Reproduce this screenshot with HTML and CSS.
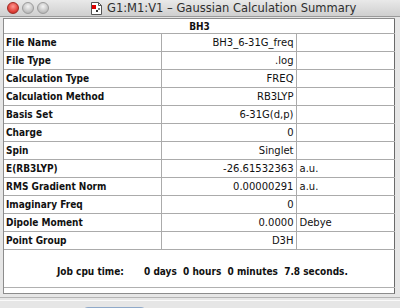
FILE: index.html
```html
<!DOCTYPE html>
<html>
<head>
<meta charset="utf-8">
<link rel="stylesheet" href="styles.css">
</head>
<body>
<div class="window">
  <div class="titlebar">
    <div class="lights">
      <span class="light red"></span>
      <span class="light"></span>
      <span class="light"></span>
    </div>
    <div class="title">
      <svg class="doc" width="11" height="13" viewBox="0 0 11 13">
        <path d="M0.5 0.5 H7.5 L10.5 3.5 V12.5 H0.5 Z" fill="#fff" stroke="#555"/>
        <path d="M7.5 0.5 V3.5 H10.5" fill="none" stroke="#555"/>
        <rect x="1" y="3" width="4" height="4" fill="#d00"/>
        <rect x="5" y="8" width="2" height="2" fill="#333"/>
        <rect x="7" y="6" width="2" height="2" fill="#777"/>
      </svg>
      <span>G1:M1:V1 – Gaussian Calculation Summary</span>
    </div>
  </div>
  <div class="panel">
    <table class="summary">
      <colgroup><col class="c1"><col class="c2"><col class="c3"></colgroup>
      <tr class="head"><th colspan="3">BH3</th></tr>
      <tr><td class="lbl">File Name</td><td class="val">BH3_6-31G_freq</td><td class="unit"></td></tr>
      <tr><td class="lbl">File Type</td><td class="val">.log</td><td class="unit"></td></tr>
      <tr><td class="lbl">Calculation Type</td><td class="val">FREQ</td><td class="unit"></td></tr>
      <tr><td class="lbl">Calculation Method</td><td class="val">RB3LYP</td><td class="unit"></td></tr>
      <tr><td class="lbl">Basis Set</td><td class="val">6-31G(d,p)</td><td class="unit"></td></tr>
      <tr><td class="lbl">Charge</td><td class="val">0</td><td class="unit"></td></tr>
      <tr><td class="lbl">Spin</td><td class="val">Singlet</td><td class="unit"></td></tr>
      <tr><td class="lbl">E(RB3LYP)</td><td class="val">-26.61532363</td><td class="unit">a.u.</td></tr>
      <tr><td class="lbl">RMS Gradient Norm</td><td class="val">0.00000291</td><td class="unit">a.u.</td></tr>
      <tr><td class="lbl">Imaginary Freq</td><td class="val">0</td><td class="unit"></td></tr>
      <tr><td class="lbl">Dipole Moment</td><td class="val">0.0000</td><td class="unit">Debye</td></tr>
      <tr><td class="lbl">Point Group</td><td class="val">D3H</td><td class="unit"></td></tr>
      <tr class="job"><td colspan="3"><span class="jl">Job cpu time:</span><span class="jv">0 days&nbsp; 0 hours&nbsp; 0 minutes&nbsp; 7.8 seconds.</span></td></tr>
    </table>
  </div>
  <div class="sep"></div>
  <div class="buttons"><span class="btn"></span></div>
</div>
</body>
</html>
```
FILE: styles.css
```css
html, body {
  margin: 0;
  padding: 0;
}
body {
  width: 400px;
  height: 308px;
  overflow: hidden;
  background: #e8e8e8;
  font-family: "DejaVu Sans", "Noto Sans", sans-serif;
  color: #111;
}
.window {
  width: 400px;
  height: 308px;
  display: flex;
  flex-direction: column;
  background: #e6e6e6;
}
.titlebar {
  height: 16px;
  flex: none;
  display: flex;
  align-items: center;
  position: relative;
  background: linear-gradient(#e9e9e9, #cfcfcf);
  border-bottom: 1px solid #9a9a9a;
}
.lights {
  display: flex;
  gap: 3px;
  padding-left: 7px;
}
.light {
  width: 12px;
  height: 12px;
  border-radius: 50%;
  box-sizing: border-box;
  background: radial-gradient(circle at 50% 35%, #f4f4f4, #bdbdbd 70%, #a6a6a6);
  border: 1px solid #9c9c9c;
}
.light.red {
  background: radial-gradient(circle at 50% 35%, #ff9a94, #e2443c 60%, #b3241d);
  border-color: #9e2a24;
}
.title {
  position: absolute;
  left: 91px;
  top: 1px;
  display: flex;
  align-items: center;
  gap: 5px;
  font-size: 11.5px;
  color: #2e2e2e;
  white-space: nowrap;
}
.panel {
  margin: 1px 5px 0 3px;
  height: 275px;
  background: #fff;
  border: 1px solid #8c8c8c;
  border-right-color: #6a6a6a;
  border-top: 0;
  flex: none;
}
.summary {
  border-collapse: collapse;
  width: 391px;
  table-layout: fixed;
  font-size: 10px;
}
.c1 { width: 157px; }
.c2 { width: 135px; }
.c3 { width: 99px; }
.summary th, .summary td {
  padding: 0;
  border: 1px solid #ababab;
  white-space: nowrap;
}
.summary tr > :first-child { border-left: 0; }
.summary tr > :last-child { border-right: 0; }
.head th {
  height: 14px;
  font-family: "DejaVu Sans Condensed", "DejaVu Sans", sans-serif;
  font-weight: bold;
  text-align: center;
  border-top: 1px solid #8c8c8c;
}
.summary td {
  height: 17px;
}
.lbl {
  font-family: "DejaVu Sans Condensed", "DejaVu Sans", sans-serif;
  font-weight: bold;
  padding-left: 2px !important;
}
.val {
  text-align: right;
  padding-right: 2px !important;
}
.unit {
  padding-left: 3px !important;
}
.summary .job td {
  font-family: "DejaVu Sans Condensed", "DejaVu Sans", sans-serif;
  font-weight: bold;
  padding-left: 53px;
  padding-top: 6px;
  box-sizing: border-box;
  height: 38px;
  border-bottom: 1px solid #b0b0b0;
}
.jl {
  display: inline-block;
  width: 87px;
}
.sep {
  height: 2px;
  margin: 3px 0 0 0;
  border-top: 1px solid #b4b4b4;
  border-bottom: 1px solid #fafafa;
  flex: none;
}
.buttons {
  padding: 6px 0 0 82px;
}
.btn {
  display: block;
  width: 63px;
  height: 12px;
  border-radius: 6px;
  background: linear-gradient(#c7ddf3, #a8c8ec);
  border: 1px solid #8fa9c9;
}
```
